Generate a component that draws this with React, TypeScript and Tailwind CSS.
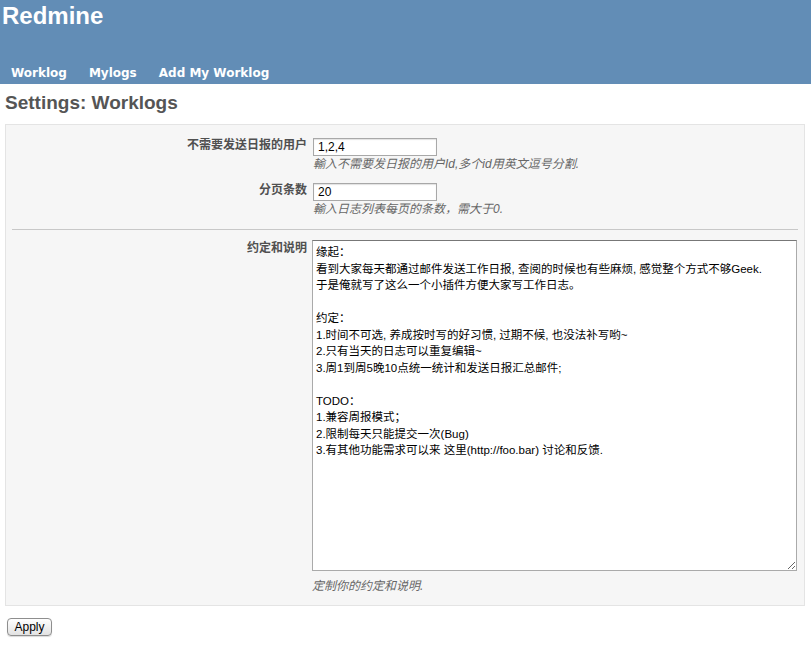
import React from "react";

const cjk = "font-['Liberation_Sans','Noto_Sans_CJK_SC',sans-serif]";

const notes = `缘起：
看到大家每天都通过邮件发送工作日报, 查阅的时候也有些麻烦, 感觉整个方式不够Geek.
于是俺就写了这么一个小插件方便大家写工作日志。

约定：
1.时间不可选, 养成按时写的好习惯, 过期不候, 也没法补写哟~
2.只有当天的日志可以重复编辑~
3.周1到周5晚10点统一统计和发送日报汇总邮件;

TODO：
1.兼容周报模式；
2.限制每天只能提交一次(Bug)
3.有其他功能需求可以来 这里(http://foo.bar) 讨论和反馈.`;

function Label({ children }: { children: React.ReactNode }) {
  return (
    <div className="w-[301px] shrink-0 text-right text-[12px] font-bold leading-[12px] text-[#505050]">
      {children}
    </div>
  );
}

function Help({ children }: { children: React.ReactNode }) {
  return <div className="text-[12px] italic leading-[17px] text-[#666]">{children}</div>;
}

function Field({ label, value, help, className = "" }: { label: string; value: string; help: string; className?: string }) {
  return (
    <div className={`flex items-start ${className}`}>
      <div className="pt-[1px]">
        <Label>{label}</Label>
      </div>
      <div className="ml-[6px]">
        <input
          defaultValue={value}
          className="block h-[18px] w-[124px] border border-[#a8a8a8] bg-white px-[4px] text-[12px] text-black shadow-[inset_0_1px_1px_rgba(0,0,0,0.12)] outline-none"
        />
        <Help>{help}</Help>
      </div>
    </div>
  );
}

export default function App() {
  return (
    <div className={`min-h-[651px] bg-white ${cjk}`}>
      <div className="h-[84px] bg-[#628db6] text-white">
        <div className="pl-[2px] pt-[1px] text-[24px] font-bold leading-[30px]">Redmine</div>
        <div className="mt-[34px] flex gap-[22px] pl-[11px] font-['DejaVu_Sans',sans-serif] text-[12px] font-bold leading-[16px]">
          <span>Worklog</span>
          <span>Mylogs</span>
          <span>Add My Worklog</span>
        </div>
      </div>

      <h2 className="ml-[5px] mt-[7px] text-[19px] font-bold leading-[24px] text-[#555]">Settings: Worklogs</h2>

      <div className="ml-[5px] mr-[6px] mt-[9px] border border-[#e4e4e4] bg-[#f6f6f6] pb-[10px]">
        <Field className="mt-[13px]" label="不需要发送日报的用户" value="1,2,4" help="輸入不需要发日报的用户Id,多个id用英文逗号分割." />
        <Field className="mt-[10px]" label="分页条数" value="20" help="輸入日志列表每页的条数，需大于0." />

        <div className="mx-[6px] mt-[11px] h-px bg-[#c8c8c8]" />

        <div className="mt-[10px] flex items-start">
          <div className="pt-[2px]">
            <Label>约定和说明</Label>
          </div>
          <div className="ml-[5px]">
            <textarea
              defaultValue={notes}
              className="block h-[331px] w-[485px] resize border border-[#aaa] border-t-[#777] bg-white px-[3px] pt-[3px] text-[11.5px] leading-[16.5px] text-black outline-none"
            />
            <div className="mt-[7px]">
              <Help>定制你的约定和说明.</Help>
            </div>
          </div>
        </div>
      </div>

      <button className="ml-[7px] mt-[12px] h-[18px] w-[45px] rounded-[4px] border border-[#8e8e8e] bg-gradient-to-b from-white to-[#e2e2e2] text-[12px] leading-[16px] text-black shadow-[0_1px_1px_rgba(0,0,0,0.15)]">
        Apply
      </button>
    </div>
  );
}
